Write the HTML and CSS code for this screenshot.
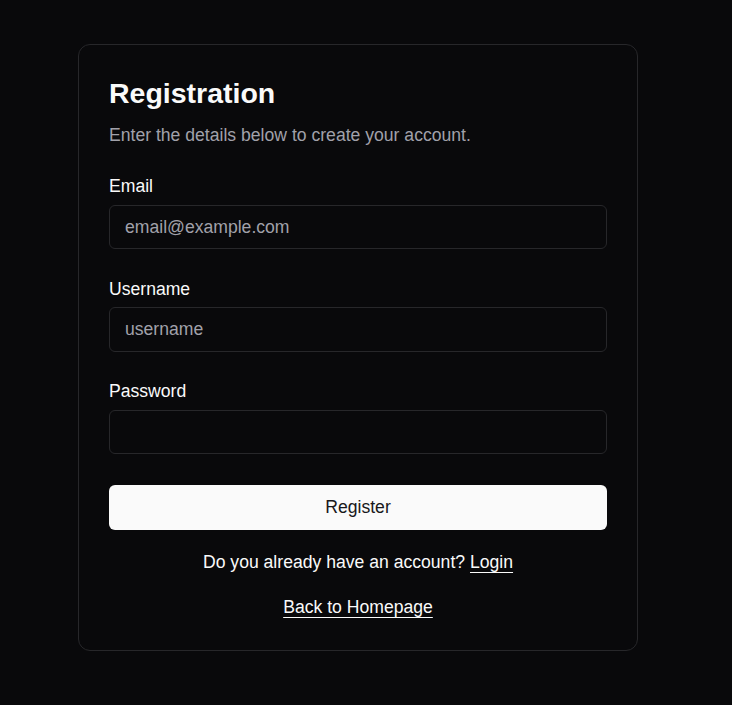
FILE: index.html
```
<html>
<head>
<meta charset="utf-8">
<meta name="viewport" content="width=device-width, initial-scale=1">
<link rel="stylesheet" href="styles.css">
</head>
<body>
	<main class="page">
		<div class="card">
			<h1 class="title">Registration</h1>
			<p class="subtitle">Enter the details below to create your account.</p>
			<form class="form" onsubmit="return false">
				<div class="field">
					<label for="email">Email</label>
					<input type="email" id="email" class="input" placeholder="email@example.com" autocomplete="off">
				</div>
				<div class="field">
					<label for="username">Username</label>
					<input type="text" id="username" class="input" placeholder="username" autocomplete="off">
				</div>
				<div class="field">
					<label for="password">Password</label>
					<input type="password" id="password" class="input" autocomplete="off">
				</div>
				<button type="submit" class="button">Register</button>
			</form>
			<p class="switch">Do you already have an account? <a href="#">Login</a></p>
			<p class="back"><a href="#">Back to Homepage</a></p>
		</div>
	</main>
</body>
</html>
```
FILE: styles.css
```
body {
	margin: 0;
	background: #09090b;
	color: #fafafa;
	font-family: "Liberation Sans", Arial, sans-serif;
	font-size: 17.6px;
	line-height: 26.4px;
	min-height: 100vh;
}

.page {
	padding: 44px 78px;
}

.card {
	width: 560px;
	box-sizing: border-box;
	padding: 30px;
	border: solid #27272a 1px;
	border-radius: 12px;
	background: #09090b;
}

.title {
	margin: 0;
	font-size: 28.5px;
	line-height: 36px;
	font-weight: bold;
}

.subtitle {
	margin: 11px 0 0;
	color: #a1a1aa;
}

.form {
	margin-top: 25px;
	display: flex;
	flex-direction: column;
	gap: 26.5px;
}

.field {
	display: flex;
	flex-direction: column;
	gap: 5px;
}

.input {
	height: 44.5px;
	box-sizing: border-box;
	padding: 0 15px;
	border: solid #27272a 1px;
	border-radius: 6px;
	background: #09090b;
	color: #fafafa;
	font: inherit;
	outline: none;
}
.input::placeholder {
	color: #a1a1aa;
}

.button {
	margin-top: 4.5px;
	height: 44.5px;
	border: none;
	border-radius: 6px;
	background: #fafafa;
	color: #18181b;
	font: inherit;
}

.switch {
	margin: 19px 0 0;
	text-align: center;
}

.back {
	margin: 18.5px 0 0;
	text-align: center;
}

.switch a,
.back a {
	color: #fafafa;
	text-decoration: underline;
	text-underline-offset: 4px;
	text-decoration-thickness: 1px;
}
```
